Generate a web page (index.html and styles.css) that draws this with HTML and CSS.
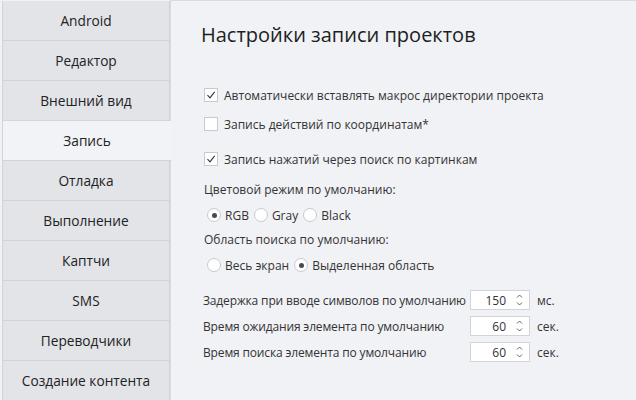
FILE: index.html
```html
<!DOCTYPE html>
<html lang="ru">

<head>
    <meta charset="UTF-8">
    <title>Настройки записи проектов</title>
    <link rel="stylesheet" href="styles.css">
</head>

<body>

    <div class="window">
        <div class="sidebar">
            <div class="tab">Android</div>
            <div class="tab">Редактор</div>
            <div class="tab">Внешний вид</div>
            <div class="tab active">Запись</div>
            <div class="tab">Отладка</div>
            <div class="tab">Выполнение</div>
            <div class="tab">Каптчи</div>
            <div class="tab">SMS</div>
            <div class="tab">Переводчики</div>
            <div class="tab">Создание контента</div>
        </div>

        <div class="content">
            <h1 class="title">Настройки записи проектов</h1>

            <div class="check first">
                <span class="box"><svg width="10" height="10" viewBox="0 0 10 10"><path d="M1.5 5.2 L4 7.8 L8.6 1.8" fill="none" stroke="#333" stroke-width="1.1"/></svg></span>
                Автоматически вставлять макрос директории проекта
            </div>
            <div class="check second">
                <span class="box"></span>
                Запись действий по координатам*
            </div>
            <div class="check third">
                <span class="box"><svg width="10" height="10" viewBox="0 0 10 10"><path d="M1.5 5.2 L4 7.8 L8.6 1.8" fill="none" stroke="#333" stroke-width="1.1"/></svg></span>
                Запись нажатий через поиск по картинкам
            </div>

            <div class="group-label">Цветовой режим по умолчанию:</div>
            <div class="radios">
                <span class="radio on"><span class="dot"></span>RGB</span>
                <span class="radio"><span class="dot"></span>Gray</span>
                <span class="radio"><span class="dot"></span>Black</span>
            </div>

            <div class="group-label second-group">Область поиска по умолчанию:</div>
            <div class="radios">
                <span class="radio"><span class="dot"></span>Весь экран</span>
                <span class="radio on"><span class="dot"></span>Выделенная область</span>
            </div>

            <div class="spins">
                <div class="spin-row">
                    <span class="spin-label">Задержка при вводе символов по умолчанию</span>
                    <span class="spin"><span class="num">150</span><svg class="arrows" width="7" height="14" viewBox="0 0 7 14"><path d="M1 4.5 L3.5 2 L6 4.5 M1 9.5 L3.5 12 L6 9.5" fill="none" stroke="#666" stroke-width="1"/></svg></span>
                    <span class="unit">мс.</span>
                </div>
                <div class="spin-row">
                    <span class="spin-label">Время ожидания элемента по умолчанию</span>
                    <span class="spin"><span class="num">60</span><svg class="arrows" width="7" height="14" viewBox="0 0 7 14"><path d="M1 4.5 L3.5 2 L6 4.5 M1 9.5 L3.5 12 L6 9.5" fill="none" stroke="#666" stroke-width="1"/></svg></span>
                    <span class="unit">сек.</span>
                </div>
                <div class="spin-row">
                    <span class="spin-label">Время поиска элемента по умолчанию</span>
                    <span class="spin"><span class="num">60</span><svg class="arrows" width="7" height="14" viewBox="0 0 7 14"><path d="M1 4.5 L3.5 2 L6 4.5 M1 9.5 L3.5 12 L6 9.5" fill="none" stroke="#666" stroke-width="1"/></svg></span>
                    <span class="unit">сек.</span>
                </div>
            </div>
        </div>
    </div>

</body>

</html>
```

FILE: styles.css
```css
body {
    margin: 0;
    background: #f1f2f6;
    font-family: "Open Sans", Arial, sans-serif;
    color: #333333;
}

.window {
    display: flex;
    height: 400px;
    overflow: hidden;
}

.sidebar {
    width: 168px;
    padding: 1px 0 0 2px;
    display: flex;
    flex-direction: column;
}

.tab {
    box-sizing: border-box;
    height: 40px;
    flex-shrink: 0;
    display: flex;
    align-items: center;
    justify-content: center;
    background: #e3e4e8;
    border: 1px solid #cfd3da;
    border-top: none;
    font-size: 13.7px;
    color: #222222;
}

.tab.active {
    position: relative;
    z-index: 1;
    margin-right: -1px;
    background: #f2f3f7;
    border-top: 1px solid #d3d6dc;
    border-right: none;
    margin-top: -1px;
    height: 41px;
}

.content {
    flex: 1;
    border-top: 1px solid #d8dbe0;
    border-left: 1px solid #d8dbe0;
    padding-left: 30px;
    font-size: 12px;
}

.title {
    margin: 20px 0 0 0;
    font-size: 20px;
    font-weight: normal;
    color: #1e1e1e;
}

.check {
    display: flex;
    align-items: center;
    height: 20px;
}

.check.first {
    margin-top: 37px;
}

.check.second {
    margin-top: 9px;
}

.check.third {
    margin-top: 15px;
}

.box {
    box-sizing: border-box;
    width: 14px;
    height: 14px;
    margin: 0 6px 0 3px;
    background: #ffffff;
    border: 1px solid #c8cace;
    display: flex;
    align-items: center;
    justify-content: center;
}

.group-label {
    margin: 11px 0 0 3px;
    height: 20px;
    line-height: 20px;
}

.group-label.second-group {
    margin-top: 5px;
}

.radios {
    display: flex;
    height: 20px;
    margin-top: 5px;
    margin-left: 6px;
}

.radio {
    display: flex;
    align-items: center;
    margin-right: 5px;
}

.dot {
    box-sizing: border-box;
    width: 14px;
    height: 14px;
    margin-right: 4px;
    border-radius: 50%;
    background: #ffffff;
    border: 1px solid #c8cace;
    display: flex;
    align-items: center;
    justify-content: center;
}

.radio.on .dot::after {
    content: "";
    width: 5px;
    height: 5px;
    border-radius: 50%;
    background: #4a4a4a;
}

.spins {
    margin-top: 15px;
    display: flex;
    flex-direction: column;
    gap: 6px;
}

.spin-row {
    display: flex;
    align-items: center;
    height: 20px;
}

.spin-label {
    width: 267px;
    flex-shrink: 0;
    padding-left: 2px;
    white-space: nowrap;
    letter-spacing: -0.15px;
}

.spin {
    box-sizing: border-box;
    width: 60px;
    height: 20px;
    flex-shrink: 0;
    background: #ffffff;
    border: 1px solid #d0d3d8;
    display: flex;
    align-items: center;
    justify-content: flex-end;
}

.num {
    margin-right: 10px;
}

.arrows {
    margin-right: 6px;
}

.unit {
    margin-left: 7px;
}
```
